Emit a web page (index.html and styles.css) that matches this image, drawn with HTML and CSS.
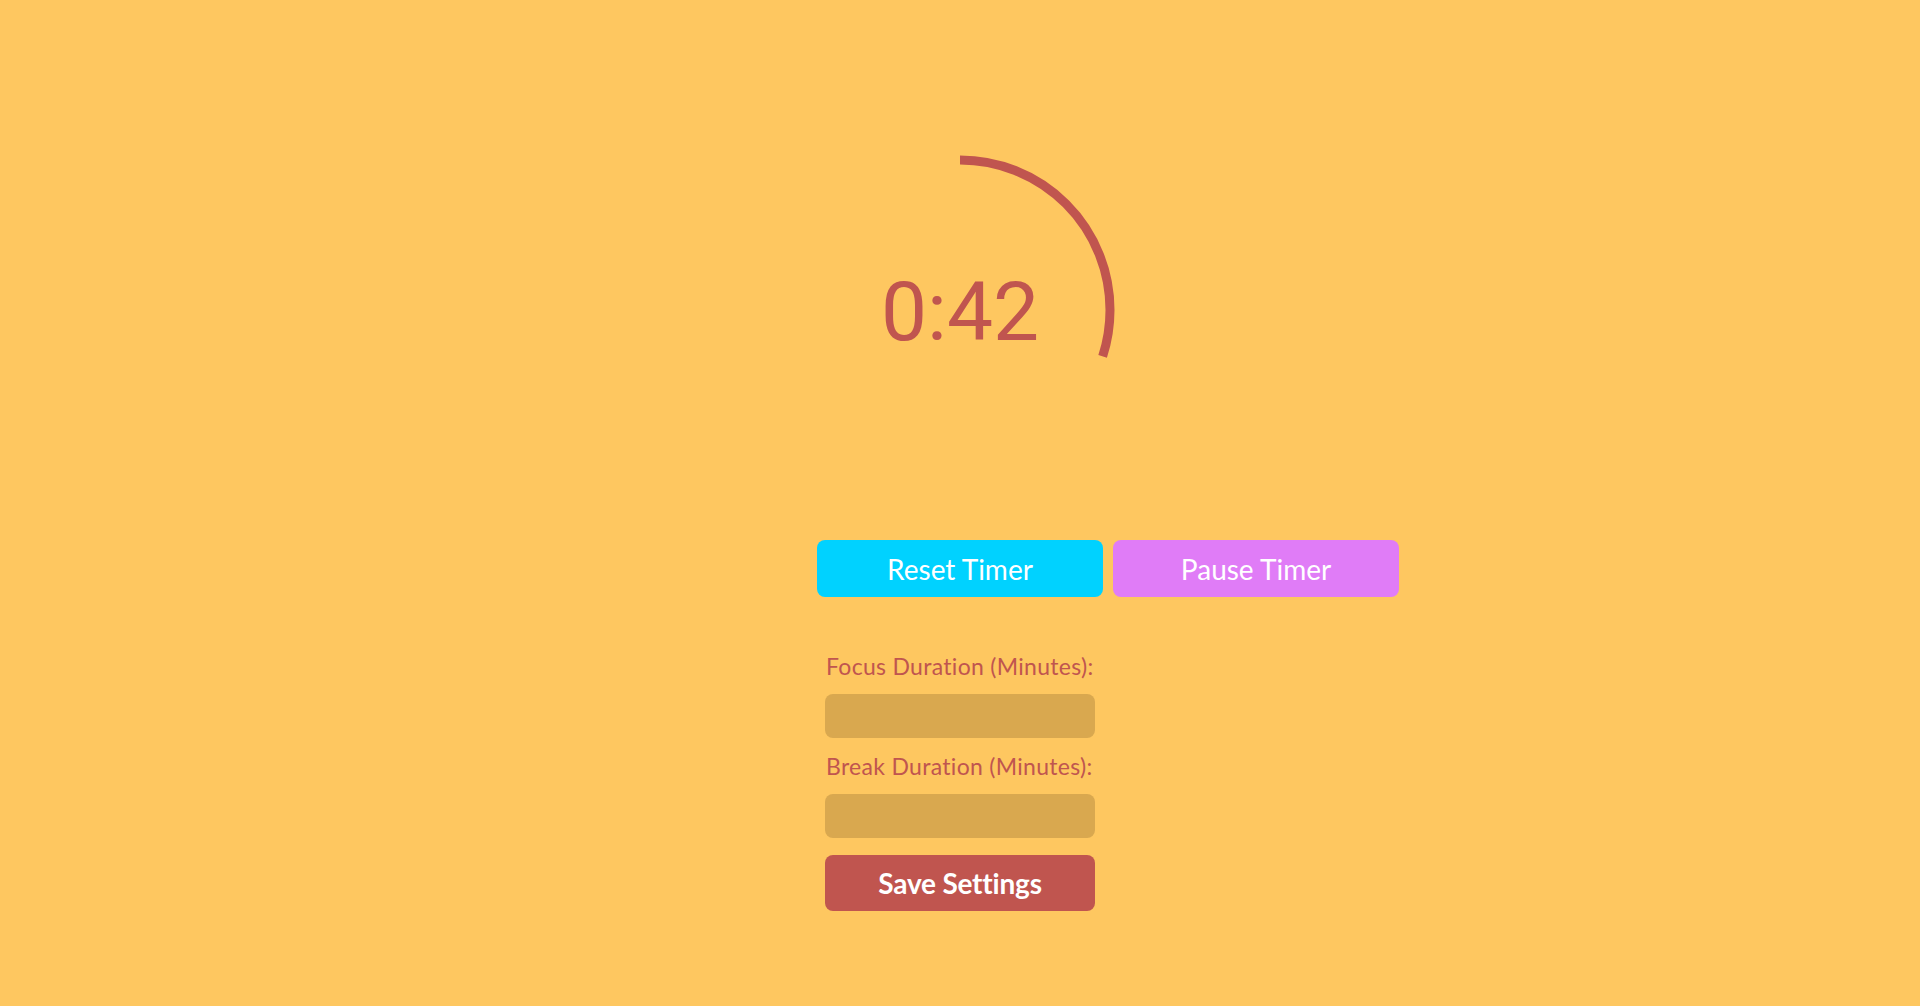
FILE: index.html
```html
<!DOCTYPE html>
<html lang="en">
<head>
<meta charset="utf-8">
<title>Focus Timer</title>
<link rel="stylesheet" href="styles.css">
</head>
<body>
<main class="app">
  <section class="timer">
    <svg class="ring" width="320" height="320" viewBox="0 0 320 320">
      <circle class="ring-progress" cx="160" cy="160" r="150" fill="none" stroke-dasharray="282.7 942.5" transform="rotate(-90 160 160)"/>
    </svg>
    <div class="time">0:42</div>
  </section>
  <div class="controls">
    <button class="btn btn-reset">Reset Timer</button>
    <button class="btn btn-pause">Pause Timer</button>
  </div>
  <form class="settings">
    <label class="field-label" for="focus">Focus Duration (Minutes):</label>
    <input class="field-input" id="focus" type="number">
    <label class="field-label" for="break">Break Duration (Minutes):</label>
    <input class="field-input" id="break" type="number">
    <button type="button" class="btn btn-save">Save Settings</button>
  </form>
</main>
</body>
</html>
```

FILE: styles.css
```css
html, body {
  margin: 0;
  padding: 0;
  background: #FEC760;
  height: 100%;
}
body {
  font-family: Lato, "Liberation Sans", sans-serif;
  overflow: hidden;
}
.app {
  display: flex;
  flex-direction: column;
  align-items: center;
  padding-top: 150px;
}
.timer {
  position: relative;
  width: 320px;
  height: 320px;
}
.ring {
  display: block;
}
.ring-progress {
  stroke: #C0554F;
  stroke-width: 9;
  stroke-linecap: butt;
}
.time {
  position: absolute;
  inset: 0;
  display: flex;
  align-items: center;
  justify-content: center;
  padding-top: 3px;
  font-family: Roboto, "Liberation Sans", sans-serif;
  font-size: 82px;
  line-height: 1;
  color: #C0554F;
}
.controls {
  width: 286px;
  display: flex;
  gap: 10px;
  margin-top: 70px;
}
.btn {
  border: none;
  border-radius: 8px;
  color: #fff;
  font-family: Lato, "Liberation Sans", sans-serif;
  font-size: 28px;
  height: 57px;
  padding: 0;
  cursor: pointer;
}
.btn-reset,
.btn-pause {
  flex: 0 0 286px;
  width: 286px;
}
.btn-reset { background: #00D2FF; }
.btn-pause { background: #E07CF7; }
.settings {
  width: 270px;
  display: flex;
  flex-direction: column;
  gap: 15px;
  margin-top: 56px;
}
.field-label {
  display: block;
  color: #C0554F;
  font-size: 23px;
  line-height: 26px;
  letter-spacing: 0.3px;
  padding-left: 1px;
  white-space: nowrap;
}
.field-input {
  box-sizing: border-box;
  height: 44px;
  border: none;
  border-radius: 8px;
  background: #D9A84F;
  padding: 0 10px;
  font-size: 20px;
  outline: none;
}
.btn-save {
  background: #C0554F;
  margin-top: 2px;
  font-weight: 700;
  letter-spacing: -0.2px;
  width: 270px;
  height: 56px;
}
```
